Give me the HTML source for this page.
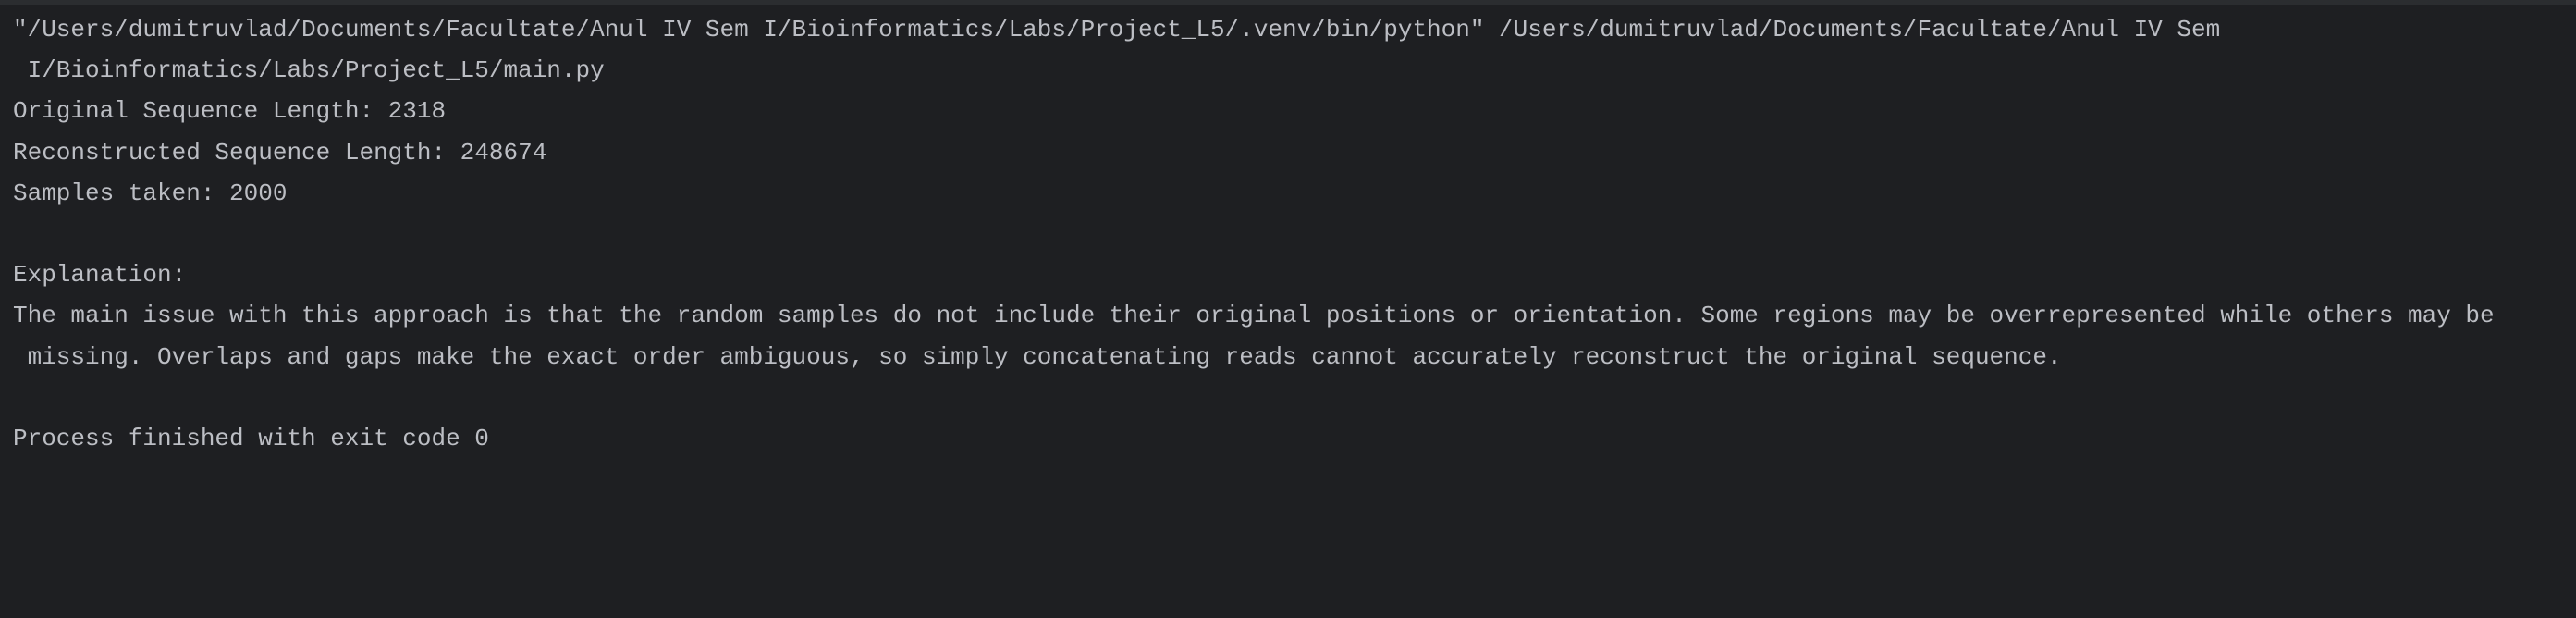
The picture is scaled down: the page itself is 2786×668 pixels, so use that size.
<!DOCTYPE html>
<html><head><meta charset="utf-8"><style>
html,body{margin:0;padding:0;width:2786px;height:668px;background:#1e1f22;overflow:hidden}
.bar{height:5px;background:#2b2d30}
pre{margin:0;padding:5px 0 0 14px;font-family:"Liberation Mono",monospace;font-size:26px;line-height:44.2px;color:#bcbec4;white-space:pre}
</style></head><body><div class="bar"></div><pre>"/Users/dumitruvlad/Documents/Facultate/Anul IV Sem I/Bioinformatics/Labs/Project_L5/.venv/bin/python" /Users/dumitruvlad/Documents/Facultate/Anul IV Sem
 I/Bioinformatics/Labs/Project_L5/main.py
Original Sequence Length: 2318
Reconstructed Sequence Length: 248674
Samples taken: 2000

Explanation:
The main issue with this approach is that the random samples do not include their original positions or orientation. Some regions may be overrepresented while others may be
 missing. Overlaps and gaps make the exact order ambiguous, so simply concatenating reads cannot accurately reconstruct the original sequence.

Process finished with exit code 0
</pre></body></html>
